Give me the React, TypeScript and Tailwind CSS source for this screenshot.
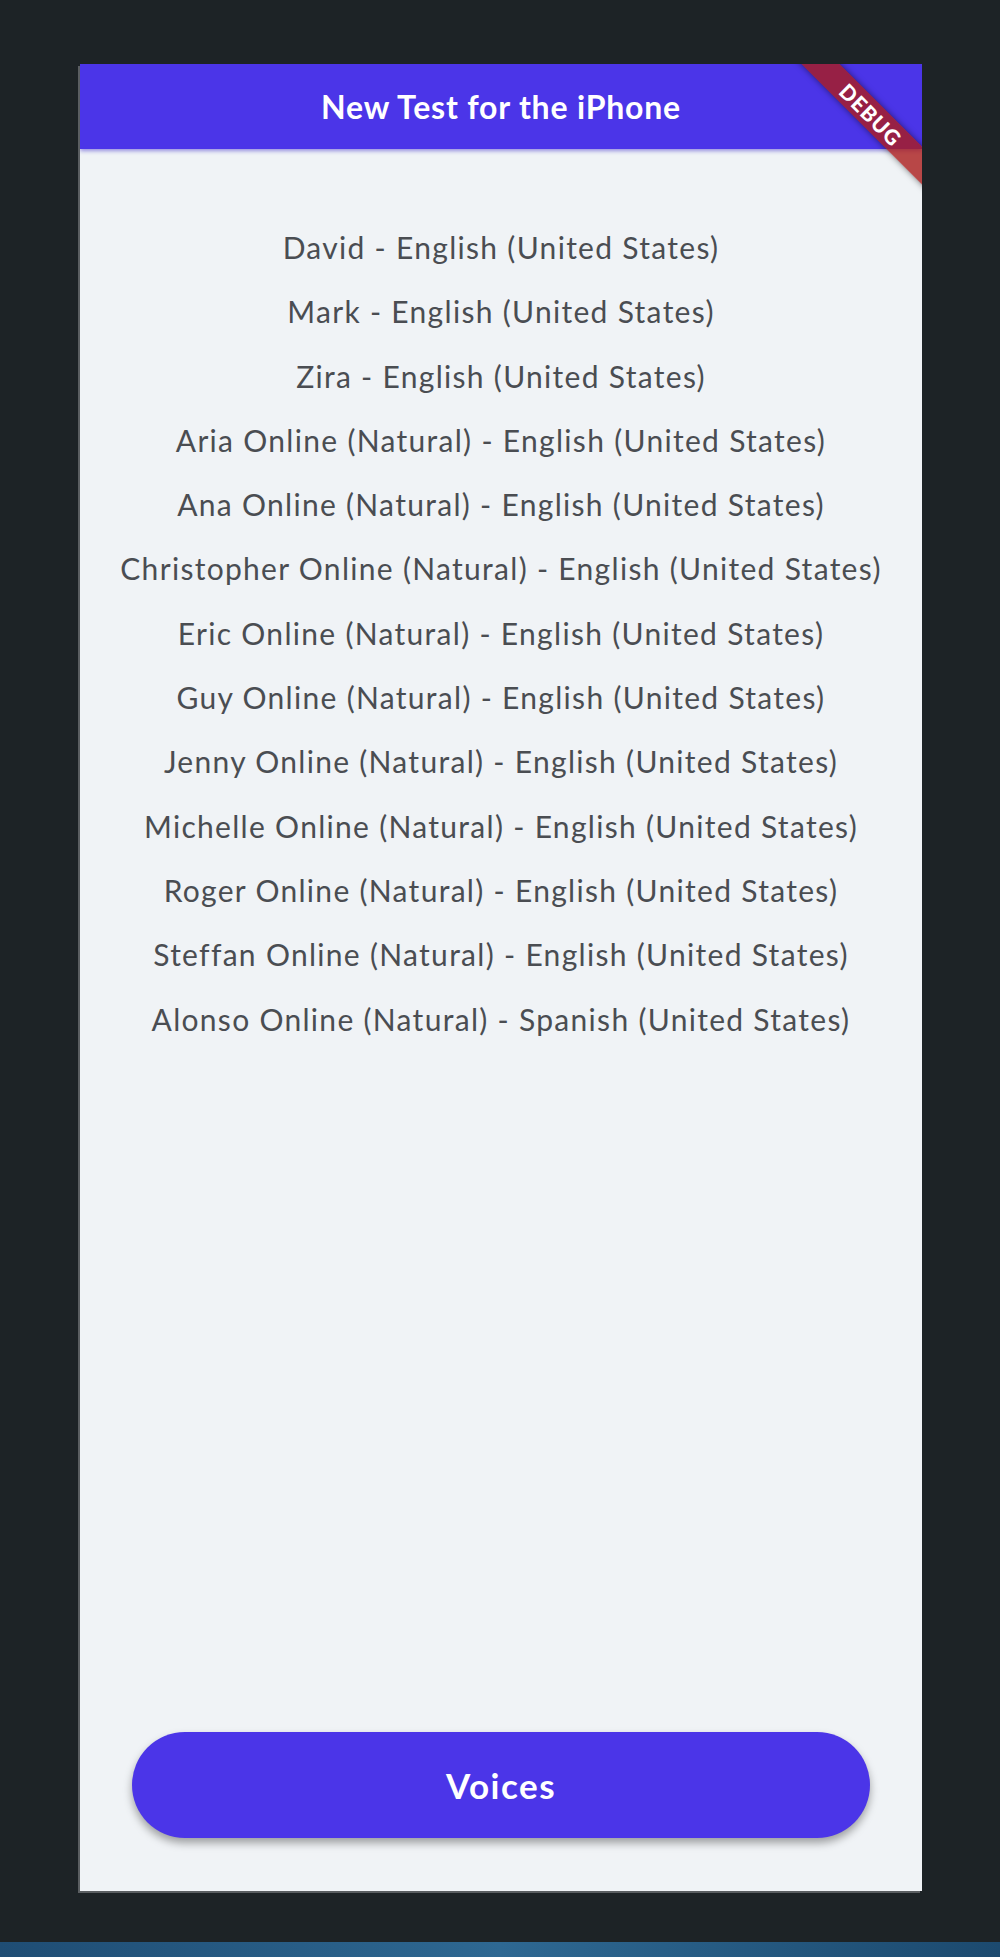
const voices = [
  'David - English (United States)',
  'Mark - English (United States)',
  'Zira - English (United States)',
  'Aria Online (Natural) - English (United States)',
  'Ana Online (Natural) - English (United States)',
  'Christopher Online (Natural) - English (United States)',
  'Eric Online (Natural) - English (United States)',
  'Guy Online (Natural) - English (United States)',
  'Jenny Online (Natural) - English (United States)',
  'Michelle Online (Natural) - English (United States)',
  'Roger Online (Natural) - English (United States)',
  'Steffan Online (Natural) - English (United States)',
  'Alonso Online (Natural) - Spanish (United States)',
];

export default function App() {
  return (
    <div className="w-[1000px] h-[1957px] bg-[#1d2326] flex flex-col font-['Lato',sans-serif]">
      <div className="flex-1 pt-[64px] pl-[80px]">
        {/* Phone screen */}
        <div className="relative w-[842px] h-[1827px] bg-[#f0f3f6] overflow-hidden flex flex-col shadow-[-2px_2px_0_#5a5e61]">
          <header className="h-[85px] shrink-0 bg-[#4b35e8] flex items-center justify-center shadow-[0_2px_4px_rgba(40,20,200,0.45)] z-10">
            <h1 className="text-white text-[32px] font-bold tracking-[0.8px]">New Test for the iPhone</h1>
          </header>

          <ul className="flex-1 pt-[66px] flex flex-col items-center">
            {voices.map((v) => (
              <li key={v} className="h-[64.3px] leading-[64.3px] text-[30px] tracking-[1.3px] text-[#4a4d52] whitespace-nowrap">
                {v}
              </li>
            ))}
          </ul>

          <div className="px-[52px] pb-[53px]">
            <button className="w-full h-[106px] rounded-full bg-[#4b35e8] text-white text-[35px] font-bold tracking-[1.5px] shadow-[0_5px_8px_rgba(0,0,0,0.35)]">
              Voices
            </button>
          </div>

          {/* Debug banner */}
          <div className="absolute left-[651px] top-[37px] w-[280px] h-[27px] rotate-45 bg-[rgba(170,28,28,0.8)] shadow-[0_0_6px_rgba(0,0,0,0.5)] flex items-center justify-center z-20">
            <span className="text-white text-[21px] font-black tracking-[1px] leading-none">DEBUG</span>
          </div>
        </div>
      </div>
      <div className="h-[15px] bg-gradient-to-r from-[#1f4d74] via-[#2e6892] to-[#1c4a6f]" />
    </div>
  );
}
